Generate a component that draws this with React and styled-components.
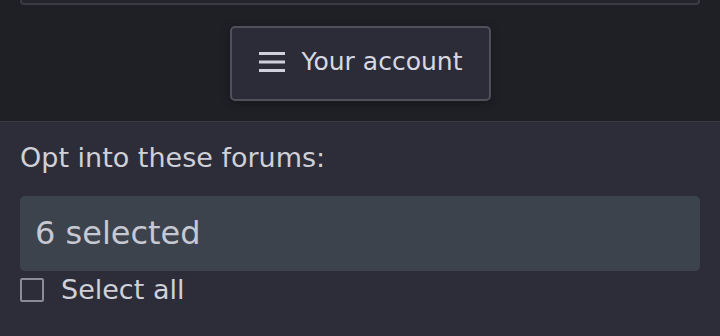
import React from "react";
import styled, { createGlobalStyle } from "styled-components";

const Global = createGlobalStyle`
  body {
    margin: 0;
    background: #2c2d38;
    font-family: "DejaVu Sans", "Noto Sans", sans-serif;
  }
`;

const Top = styled.section`
  background: #1f2026;
  height: 122px;
  border-bottom: 1px solid #3a3b44;
  display: flex;
  flex-direction: column;
  align-items: center;
  box-sizing: border-box;
`;

const CutCard = styled.div`
  width: 680px;
  height: 5px;
  box-sizing: border-box;
  background: #25262d;
  border: 2px solid #3b3c43;
  border-top: none;
  border-radius: 0 0 4px 4px;
`;

const AccountButton = styled.button`
  margin-top: 21px;
  width: 261px;
  height: 75px;
  box-sizing: border-box;
  display: flex;
  align-items: center;
  justify-content: center;
  gap: 16px;
  background: #2c2c38;
  border: 2px solid #4f5059;
  border-radius: 5px;
  color: #d8d8e2;
  font-family: inherit;
  font-size: 25px;
  padding: 0 0 4px;
  cursor: pointer;
  box-shadow: 0 2px 8px rgba(0, 0, 0, 0.3);
`;

const Body = styled.section`
  padding: 18px 20px 20px;
  display: flex;
  flex-direction: column;
`;

const Label = styled.div`
  color: #cfd0d8;
  font-size: 27px;
  line-height: 36px;
  margin-bottom: 20px;
`;

const SelectBox = styled.div`
  height: 75px;
  box-sizing: border-box;
  background: #3d434d;
  border-radius: 5px;
  display: flex;
  align-items: center;
  padding: 0 15px 2px;
  color: #c6c8d2;
  font-size: 32px;
`;

const CheckRow = styled.label`
  display: flex;
  align-items: center;
  gap: 17px;
  margin-top: 3px;
  color: #cfd0d8;
  font-size: 27px;
`;

const Box = styled.span`
  width: 24px;
  height: 24px;
  box-sizing: border-box;
  border: 2px solid #8a8c98;
  border-radius: 2px;
`;

const Burger = () => (
  <svg width="28" height="22" viewBox="0 0 28 22">
    <g fill="#d0d0dc">
      <rect x="1" y="1" width="26" height="3" />
      <rect x="1" y="9.5" width="26" height="3" />
      <rect x="1" y="18" width="26" height="3" />
    </g>
  </svg>
);

export default function App() {
  return (
    <>
      <Global />
      <Top>
        <CutCard />
        <AccountButton>
          <Burger />
          Your account
        </AccountButton>
      </Top>
      <Body>
        <Label>Opt into these forums:</Label>
        <SelectBox>6 selected</SelectBox>
        <CheckRow>
          <Box />
          Select all
        </CheckRow>
      </Body>
    </>
  );
}
